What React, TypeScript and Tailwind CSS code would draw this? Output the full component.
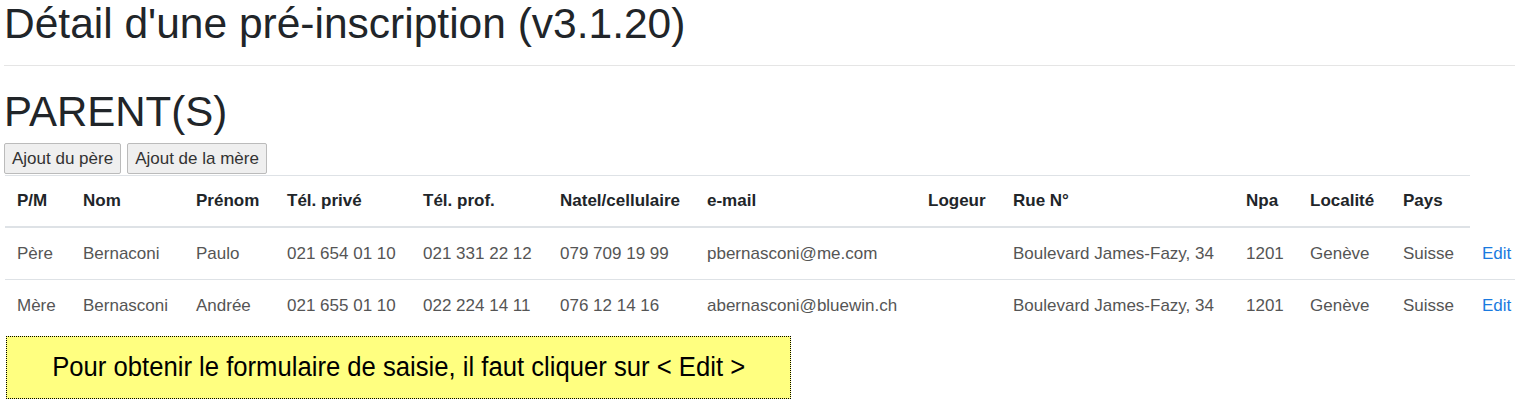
const cols = [
  { label: 'P/M', w: 'w-[66px]' },
  { label: 'Nom', w: 'w-[113px]' },
  { label: 'Prénom', w: 'w-[91px]' },
  { label: 'Tél. privé', w: 'w-[136px]' },
  { label: 'Tél. prof.', w: 'w-[137px]' },
  { label: 'Natel/cellulaire', w: 'w-[147px]' },
  { label: 'e-mail', w: 'w-[221px]' },
  { label: 'Logeur', w: 'w-[85px]' },
  { label: 'Rue N°', w: 'w-[233px]' },
  { label: 'Npa', w: 'w-[64px]' },
  { label: 'Localité', w: 'w-[93px]' },
  { label: 'Pays', w: 'w-[79px]' },
]

const rows = [
  ['Père', 'Bernaconi', 'Paulo', '021 654 01 10', '021 331 22 12', '079 709 19 99', 'pbernasconi@me.com', '', 'Boulevard James-Fazy, 34', '1201', 'Genève', 'Suisse'],
  ['Mère', 'Bernasconi', 'Andrée', '021 655 01 10', '022 224 14 11', '076 12 14 16', 'abernasconi@bluewin.ch', '', 'Boulevard James-Fazy, 34', '1201', 'Genève', 'Suisse'],
]

export default function App() {
  return (
    <div className="w-[1515px] h-[401px] bg-white overflow-hidden font-['Liberation_Sans',Arial,sans-serif] text-[#212529]">
      <div className="pl-[4px]">
        <h1 className="text-[42.5px] leading-[46px] pt-[1px] whitespace-nowrap">
          Détail d'une pré-inscription (v3.1.20)
        </h1>
        <div className="mt-[18px] border-t border-[#e5e5e5]" />
        <h2 className="mt-[23px] text-[42px] leading-[46px]">PARENT(S)</h2>

        <div className="mt-[8px] flex gap-[6px]">
          <button className="h-[31px] px-[7px] text-[17px] text-[#333] bg-[#efefef] border border-[#bbb] rounded-[2px]">
            Ajout du père
          </button>
          <button className="h-[31px] px-[7px] text-[17px] text-[#333] bg-[#efefef] border border-[#bbb] rounded-[2px]">
            Ajout de la mère
          </button>
        </div>

        <div className="mt-[1px] ml-[1px]">
          <div className="flex w-[1465px] h-[53px] items-center border-t border-b-2 border-[#dee2e6] text-[17px] font-bold">
            {cols.map((c) => (
              <div key={c.label} className={`${c.w} shrink-0 px-[12px] whitespace-nowrap`}>
                {c.label}
              </div>
            ))}
          </div>
          {rows.map((r, i) => (
            <div
              key={i}
              className={`flex w-[1510px] h-[52px] items-center text-[17px] text-[#555] ${i === 0 ? 'border-b border-[#dee2e6]' : ''}`}
            >
              {r.map((v, j) => (
                <div key={j} className={`${cols[j].w} shrink-0 px-[12px] whitespace-nowrap`}>
                  {v}
                </div>
              ))}
              <div className="px-[12px] text-[#1a7ae0] whitespace-nowrap">Edit</div>
            </div>
          ))}
        </div>
      </div>

      <div className="ml-[6px] mt-[4px] w-[785px] h-[63px] bg-[#ffff80] border border-dotted border-black flex items-center justify-center overflow-hidden">
        <span className="text-[27px] text-black whitespace-nowrap scale-x-[0.95]">
          Pour obtenir le formulaire de saisie, il faut cliquer sur &lt; Edit &gt;
        </span>
      </div>
    </div>
  )
}
